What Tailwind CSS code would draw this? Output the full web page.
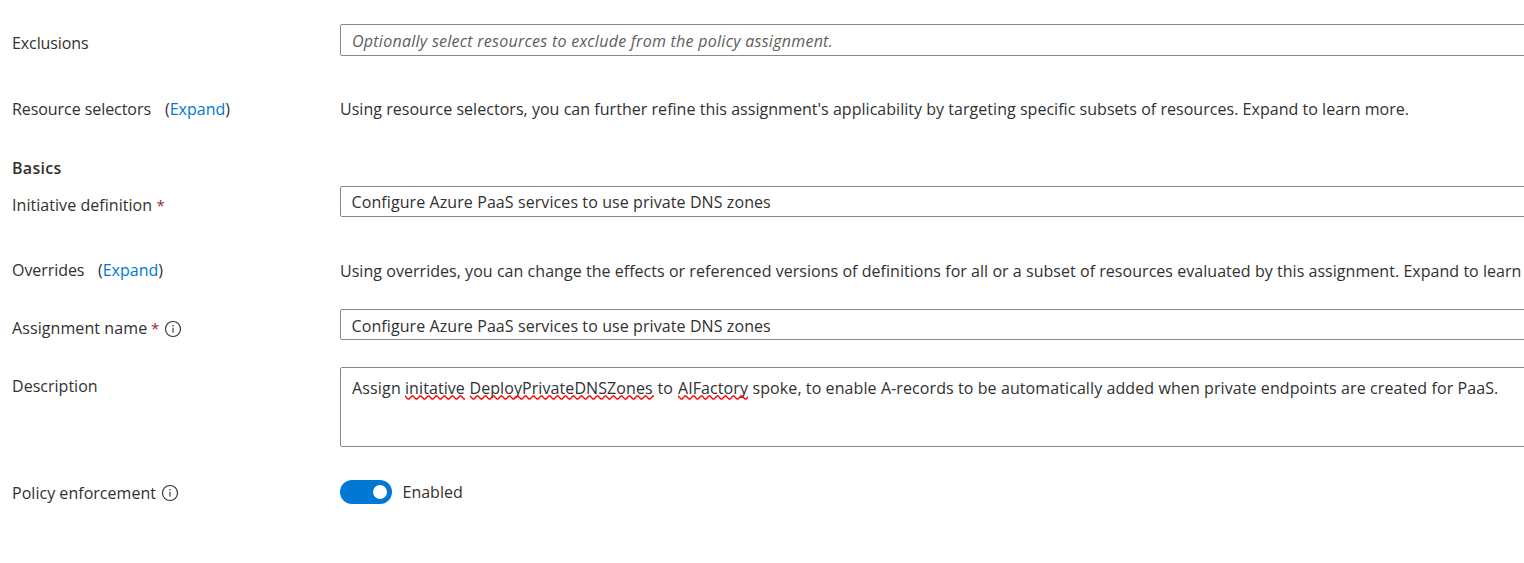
<!DOCTYPE html>
<html lang="en">
<head>
<meta charset="utf-8">
<title>Assign initiative</title>
<script src="https://cdn.jsdelivr.net/npm/@tailwindcss/browser@4"></script>
</head>
<body class="bg-white overflow-hidden">
<svg class="absolute size-0">
  <symbol id="info" viewBox="0 0 18 18"><circle cx="9" cy="9" r="7.5" fill="none" stroke="#323130" stroke-width="1.15"/><path d="M9 7.8v5" stroke="#323130" stroke-width="1.1"/><circle cx="9" cy="5.8" r=".8" fill="#323130"/></symbol>
  <defs><pattern id="wave" width="8" height="5" patternUnits="userSpaceOnUse"><path d="M-1 0L0 1L3 4H4L7 1L8 1" fill="none" stroke="#f00" stroke-width="1.3"/></pattern></defs>
</svg>
<main class="w-[1524px] h-[563px] overflow-hidden pl-3 pt-6 font-['Open_Sans',sans-serif] text-[16px] leading-5 text-[#323130] whitespace-nowrap">
  <div class="flex h-8">
    <div class="w-[328px] shrink-0 pt-[9px] tracking-[-0.1px]">Exclusions</div>
    <div class="flex-1 -mr-2 border border-[#8a8886] rounded-xs pl-[11px] pt-1.5 italic text-[#605e5c] tracking-[0.265px]">Optionally select resources to exclude from the policy assignment.</div>
  </div>
  <div class="flex h-5 mt-[43px]">
    <div class="w-[328px] shrink-0 flex"><span class="w-[153px] tracking-[-0.06px]">Resource selectors</span><span>(<a class="text-[#0078d4]">Expand</a>)</span></div>
    <div class="tracking-[0.035px]">Using resource selectors, you can further refine this assignment's applicability by targeting specific subsets of resources. Expand to learn more.</div>
  </div>
  <h2 class="h-5 mt-[39px] font-semibold tracking-[0.3px]">Basics</h2>
  <div class="flex h-[31px] mt-2">
    <div class="w-[328px] shrink-0 pt-[9px] flex"><span class="w-[144.5px] tracking-[0.05px]">Initiative definition</span><span class="text-[#a4262c] text-[15px]">*</span></div>
    <div class="flex-1 -mr-2 border border-[#8a8886] rounded-xs pl-[10.5px] pt-[5px] tracking-[0.09px]">Configure Azure PaaS services to use private DNS zones</div>
  </div>
  <div class="flex h-[21px] mt-[43px]">
    <div class="w-[328px] shrink-0 flex"><span class="w-[86px] tracking-[-0.06px]">Overrides</span><span>(<a class="text-[#0078d4]">Expand</a>)</span></div>
    <div class="pt-px tracking-[0.042px]">Using overrides, you can change the effects or referenced versions of definitions for all or a subset of resources evaluated by this assignment. Expand to learn</div>
  </div>
  <div class="flex h-[31px] mt-7">
    <div class="w-[328px] shrink-0 pt-[9px] flex"><span class="w-[139px] tracking-[0.09px]">Assignment name</span><span class="w-[13px] text-[#a4262c] text-[15px]">*</span><svg class="size-[18px] mt-0.5"><use href="#info"/></svg></div>
    <div class="flex-1 -mr-2 border border-[#8a8886] rounded-xs pl-[10.5px] pt-1.5 tracking-[0.09px]">Configure Azure PaaS services to use private DNS zones</div>
  </div>
  <div class="flex h-20 mt-[27px]">
    <div class="w-[328px] shrink-0 pt-[9px] tracking-[0.02px]">Description</div>
    <div class="flex-1 -mr-2 border border-[#8a8886] rounded-xs pl-[11px] pt-2.5 flex">
      <span class="w-[53px] tracking-[0.16px]">Assign</span>
      <span class="relative w-[64.5px] h-5 tracking-[0.08px]">initative<svg class="absolute left-0 top-[17px] w-[60px] h-[5px]"><rect width="60" height="5" fill="url(#wave)"/></svg></span>
      <span class="relative w-[188px] h-5 tracking-[0.08px]">DeployPrivateDNSZones<svg class="absolute left-0 top-[17px] w-[184px] h-[5px]"><rect width="184" height="5" fill="url(#wave)"/></svg></span>
      <span class="w-[20.5px]">to</span>
      <span class="relative w-[74.5px] h-5 tracking-[0.08px]">AIFactory<svg class="absolute left-0 top-[17px] w-[70px] h-[5px]"><rect width="70" height="5" fill="url(#wave)"/></svg></span>
      <span class="tracking-[0.09px]">spoke, to enable A-records to be automatically added when private endpoints are created for PaaS.</span>
    </div>
  </div>
  <div class="flex h-6 mt-[33px]">
    <div class="w-[328px] shrink-0 pt-[3px] flex"><span class="w-[149px] tracking-[0.03px]">Policy enforcement</span><svg class="size-[18px] mt-px"><use href="#info"/></svg></div>
    <div class="w-[52px] h-6 rounded-full bg-[#0078d4] flex items-center justify-end pr-[5px]"><span class="size-3.5 rounded-full bg-white"></span></div>
    <span class="pl-[10.5px] pt-0.5">Enabled</span>
  </div>
</main>
</body>
</html>
